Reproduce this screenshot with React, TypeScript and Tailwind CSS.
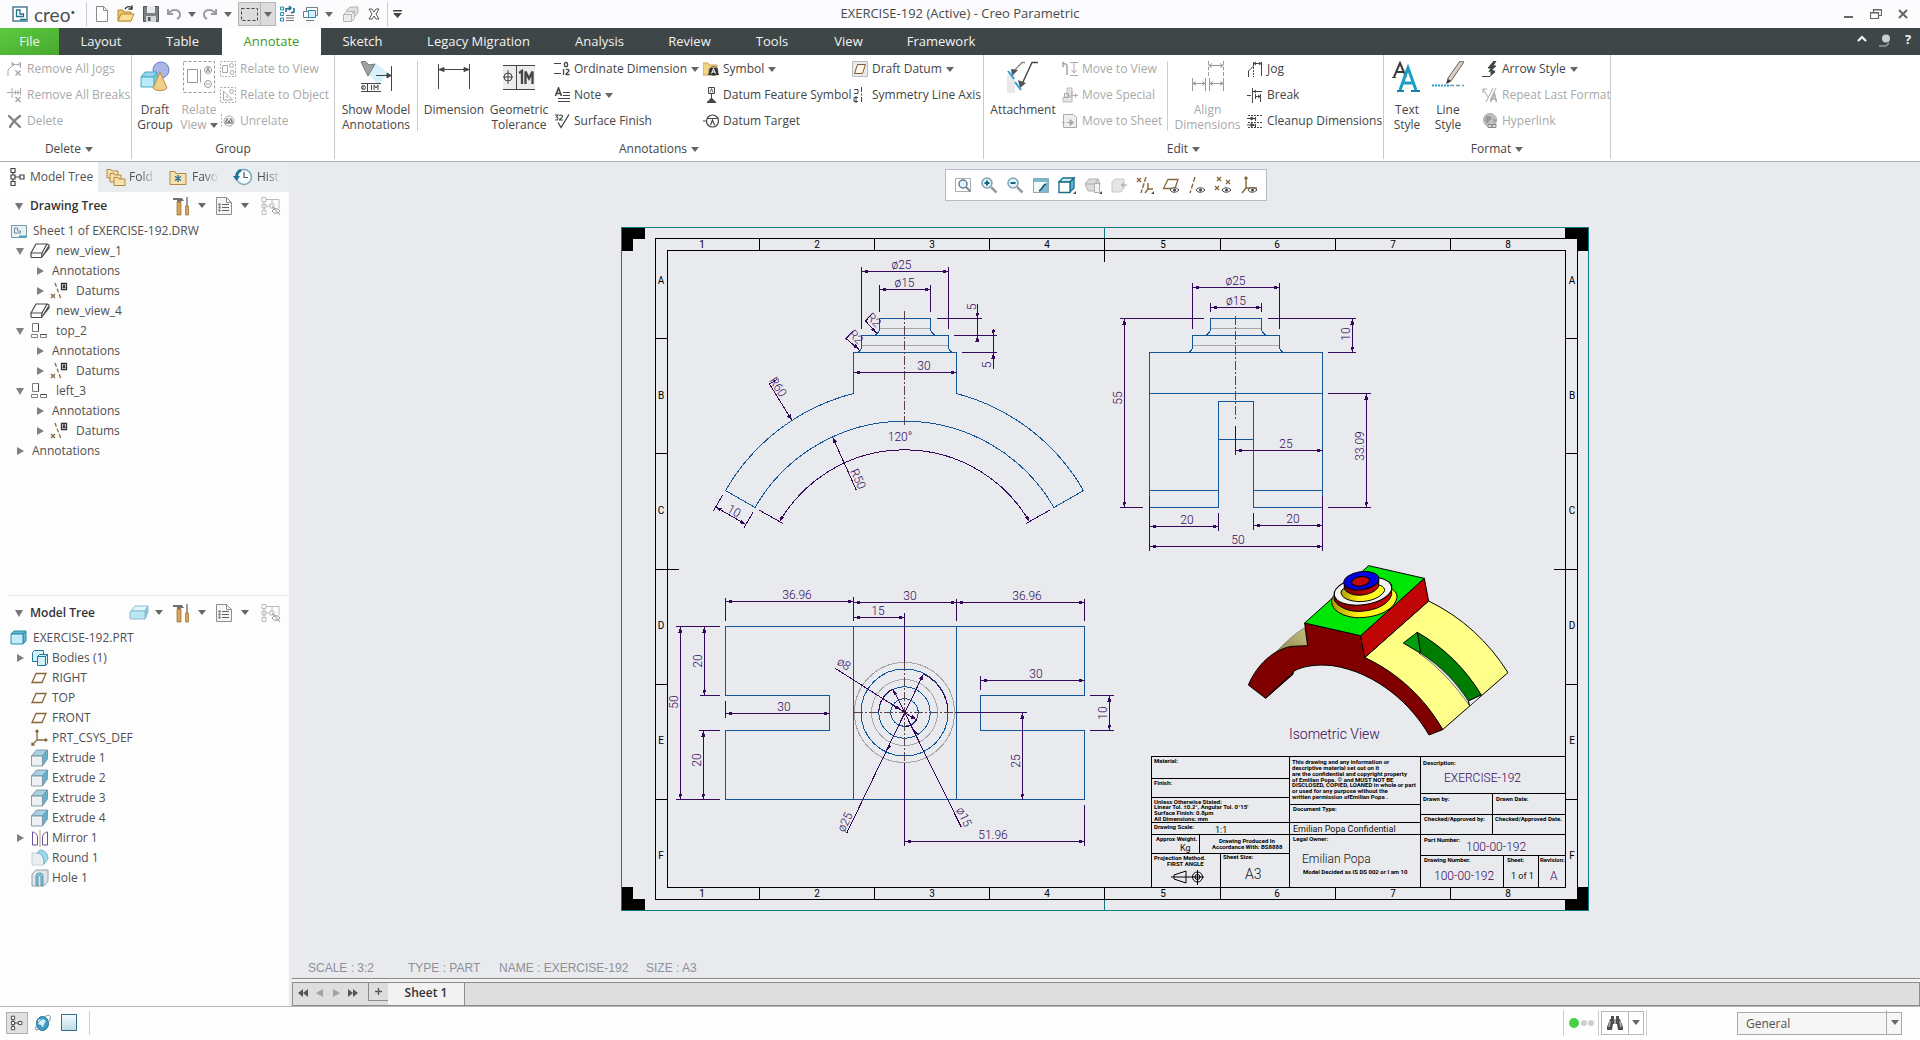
import type { ReactNode } from 'react';

const BR = '#85683a';

// 16x16 glyphs
const small: Record<string, ReactNode> = {
  jogs: (
    <g fill="none" stroke="currentColor">
      <path d="M1 15V9l4-4V1M5.500 3.500h7M13.500 1v6M7 2l-2 1.500 2 1.500M11.500 2l2 1.500-2 1.500" />
      <path d="M8.500 9.500l5 5M13.500 9.500l-5 5" strokeWidth="1.500" />
    </g>
  ),
  breaks: (
    <g fill="none" stroke="currentColor">
      <path d="M0 5.500h4M5 1v10M5 5.500h7M8.500 3.500v4M13.500 1v7M10 3.500l2.500 2-2.500 2" />
      <path d="M8.500 10l5 5M13.500 10l-5 5" strokeWidth="1.500" />
    </g>
  ),
  del: <path d="M2 3c3 3 7 7 11 11M13 3C9 6 5 10 3 14" fill="none" stroke="#858585" strokeWidth="2.400" strokeLinecap="round" />,
  relView: (
    <g fill="none" stroke="currentColor">
      <path d="M.5.5h15v15H.5z" strokeDasharray="2 1.500" stroke="#aaa" />
      <path d="M2.500 4.500h5v7h-5z" />
      <circle cx="11.500" cy="4.500" r="2" />
      <circle cx="12" cy="11.500" r="2" />
    </g>
  ),
  relObj: (
    <g fill="none" stroke="currentColor">
      <path d="M.5.5h15v15H.5z" strokeDasharray="2 1.500" stroke="#aaa" />
      <path d="M3.500 4v9h9zM6 9l2 2" />
      <circle cx="11.500" cy="4.500" r="2" />
    </g>
  ),
  unrel: (
    <g fill="none" stroke="currentColor">
      <path d="M1.500 1v14" strokeDasharray="2 1.500" stroke="#aaa" />
      <circle cx="9" cy="8" r="5" />
      <path d="M5 10.500l1.500-5h5l1.500 5z" fill="#777" />
      <path d="M7 9.500l2-4 2 4" stroke="#fff" />
    </g>
  ),
  ordinate: (
    <g fill="none" stroke="currentColor">
      <path d="M0 2.500h7M0 12.500h7" />
      <ellipse cx="12" cy="3.500" rx="1.600" ry="2.200" strokeWidth="1.300" />
      <path d="M9.500 8v6M12 9c.5-1 3-1 3 .5S12 12 12 13.500h3.500" strokeWidth="1.300" />
    </g>
  ),
  note: (
    <g stroke="currentColor">
      <path d="M1.500 9L4.500 1l3 8M2.500 6.500h4" fill="none" strokeWidth="1.600" />
      <path d="M9 5.500h7M9 8.500h7M4 11.500h12M4 14.500h12" strokeWidth="1" />
    </g>
  ),
  finish: (
    <g fill="none" stroke="currentColor">
      <path d="M1 2h3L2.500 4c2 0 2 3 0 3H1M5.500 3c.5-1.500 3-1.200 3 .3S5.500 6 5.500 7h3.500" strokeWidth="1.100" />
      <path d="M4 9.500l3 5 8-13" strokeWidth="1.300" />
    </g>
  ),
  symbol: (
    <g>
      <path d="M0 2h5l1 2h8v10H0z" fill="#f2d489" stroke="#c5a253" />
      <path d="M5 14l2-7h7l2 7z" fill="#333" />
      <circle cx="10.500" cy="10" r="4.300" fill="none" stroke="#444" />
      <path d="M8.500 12.500l2-5 2 5M9 11h3" stroke="#fff" fill="none" />
    </g>
  ),
  datumFeat: (
    <g fill="none" stroke="currentColor">
      <path d="M5.500.5h6v6h-6zM8.500 7v6" />
      <path d="M7 5.500l1.500-4L10 5.500" strokeWidth=".8" />
      <path d="M4 15.500l4.500-4.500 4.500 4.500z" fill="currentColor" />
    </g>
  ),
  datumTarget: (
    <g fill="none" stroke="currentColor" strokeWidth="1.200">
      <circle cx="9.500" cy="8" r="6" />
      <path d="M0 8h3.500M4.500 5.500h10M7.500 12l2-5 2 5" />
    </g>
  ),
  draftDatum: (
    <g>
      <path d="M.5.5h15v15H.5z" fill="#e9ebec" stroke="#b9bcbe" />
      <path d="M5.500 3.500h8l-3 9h-8z" fill="#fdf6e8" stroke="#7a5f35" />
    </g>
  ),
  symAxis: (
    <g fill="none" stroke="currentColor">
      <path d="M2 2.500h4v4H2M6 10.500H2v4h4M4 9v7" />
      <path d="M9.500 0v16" strokeDasharray="5 1.500 2 1.500" />
    </g>
  ),
  moveView: (
    <g fill="none" stroke="currentColor">
      <path d="M1 3.500C3 2 5 3 5 5v9M0 3l2-2M0 4l2 2" stroke="#aaa" strokeWidth="1.600" />
      <path d="M8 1.500h8M12 2v10M9.500 9l2.500 3 2.500-3M8 14.500h8" />
    </g>
  ),
  moveSpec: (
    <g fill="none" stroke="currentColor">
      <path d="M5 1h5v8H5zM1 10h9v5H1z" fill="#e5e5e5" stroke="#bbb" />
      <path d="M2.500 6.500h4v4h-4zM10 4v7M11 8.500h5M13.500 6.500v4" />
    </g>
  ),
  moveSheet: (
    <g fill="none" stroke="currentColor">
      <path d="M1.500 1.500h10l3 3v10h-13z" fill="#eee" stroke="#aaa" />
      <path d="M0 9.500h4" strokeDasharray="1 1" />
      <path d="M5 9.500h6M8 6.500l3.500 3-3.500 3z" fill="currentColor" />
    </g>
  ),
  jog: (
    <g fill="none" stroke="currentColor">
      <path d="M1.500 16v-6l5-5V1M7 2.500h7M14.500 1v14M9 1L7 2.500 9 4M12 1l2 1.500L12 4" />
      <path d="M6.500 6v10" strokeDasharray="2 1" />
    </g>
  ),
  brk: (
    <g fill="none" stroke="currentColor">
      <path d="M0 8.500h4M5.500 1v15M6 4.500h9M8 9.500h5M8.500 7v5M13.500 7v8" />
      <path d="M9 3L7 4.500 9 6M11 8l2 1.500L11 11" />
    </g>
  ),
  cleanup: (
    <g fill="none" stroke="currentColor">
      <path d="M1 2.500h15M1 9.500h15M1 14.500h15" strokeDasharray="2 1" />
      <path d="M0 5.500h8M0 12h8M8.500 4v4M8.500 11v3M4 4l3 1.500L4 7zM4 10.500l3 1.500-3 1.500z" fill="currentColor" />
    </g>
  ),
  arrow: (
    <g stroke="currentColor" fill="currentColor">
      <path d="M0 15.500h8l5-6" fill="none" />
      <path d="M12 0L6 7h3l-2 4 7-6h-3l3-5z" />
      <path d="M9 8l4 3-4 3z" />
    </g>
  ),
  repeat: (
    <g stroke="currentColor" fill="none">
      <path d="M1 2h4M1 2v4M1 2l3 5 2 3M11 1L4 15M14 1L8 13" />
      <path d="M8.500 15l4-8 2 8M10 12h4" strokeWidth="1.500" />
    </g>
  ),
  hyper: (
    <g>
      <circle cx="8" cy="7" r="6.500" fill="#c4c4c4" stroke="#a5a5a5" />
      <path d="M4 3c2-1 3 1 5 0l1 3-3 2-1 3-3-3zM11 5l3 2-2 3z" fill="#999" />
      <path d="M6 11.500h4v3H6zM10 11.500h4v3h-4z" fill="#ddd" stroke="#888" />
    </g>
  ),
};

// 32x32 glyphs
const large: Record<string, ReactNode> = {
  draftGroup: (
    <g>
      <circle cx="22" cy="9" r="8" fill="#a9b6e6" stroke="#6c7cc0" />
      <path d="M2 16l4-5h12l-3 5zM15 16l3-5v10l-3 5z" fill="#8fd4ea" stroke="#4fa7c4" />
      <path d="M2 16h13v10H2z" fill="#b9eaf7" stroke="#4fa7c4" />
      <path d="M21 11l-7 16c2 3.500 12 3.500 14 0z" fill="#f0cf8c" stroke="#b98d42" />
    </g>
  ),
  relateView: (
    <g fill="none" stroke="#9a9a9a">
      <path d="M.5.500h31v31H.5z" strokeDasharray="3 2" />
      <path d="M4.500 8.500h10v13h-10zM17.500 8.500v13" />
      <circle cx="25" cy="9" r="3.500" />
      <path d="M23.500 11l1.500-4 1.500 4" strokeWidth="1.500" />
      <circle cx="25" cy="23" r="3.500" />
      <path d="M23 23h4" />
    </g>
  ),
  showModel: (
    <g fill="none" stroke="#454545">
      <path d="M6 10l10-8 12 10-10 12z" fill="#d6f3fb" stroke="none" />
      <path d="M1 1l4-1 4 4 6-1-7 12-4-8z" fill="#9fa3a5" stroke="#777" />
      <path d="M31.500 5v25M16 14.500h14M27 12l4 2.500-4 2.500z" fill="#454545" />
      <path d="M1 22.500h20M1 30.500h20M7.500 22v9M3 24.500v4M5.500 26.500a2 2 0 0 0-4 0 2 2 0 0 0 4 0M11.500 24v5M14 29v-5l2 3 2-3v5" />
    </g>
  ),
  dimension: (
    <g fill="#454545" stroke="#454545">
      <path d="M.5 3v25M31.500 3v25M1 8.500h30" fill="none" />
      <path d="M1 8.500l5-2v4zM31 8.500l-5-2v4z" />
    </g>
  ),
  geoTol: (
    <g fill="none" stroke="#454545">
      <path d="M0 5h32v23H0z" fill="#ececec" stroke="none" />
      <path d="M0 4.500h32M0 28.500h32M13.500 4v25" />
      <circle cx="5" cy="16" r="4" />
      <path d="M5 9v14M0 16h10" />
      <path d="M16 12l3-2v13M22.500 23V10.500l3.500 7 3.500-7V23" strokeWidth="2.300" />
    </g>
  ),
  attachment: (
    <g>
      <path d="M0 14h8v18H0z" fill="#e9e9e9" />
      <path d="M31 1.500h-6L15 23" fill="none" stroke="#454545" strokeWidth="1.400" />
      <path d="M18 1.500h-3L6 11" fill="none" stroke="#8a8a8a" strokeWidth="1.400" />
      <path d="M11 19l8 3-6 5zM4 8l7 1-6 6z" fill="#555" />
      <path d="M1 10l6 8M8 21l6 8" stroke="#2ea2d8" strokeWidth="2" />
    </g>
  ),
  alignDim: (
    <g fill="none" stroke="#9a9a9a">
      <path d="M16.500 0v16M31.500 0v16" strokeDasharray="4 1.500" />
      <path d="M.5 17v13M13.500 17v13M17.500 17v13M31.500 17v13M17 4.500h14M1 22.500h12M18 22.500h13M20 2.500l-3 2 3 2M28 2.500l3 2-3 2M4 20.500l-3 2 3 2M10 20.500l3 2-3 2M21 20.500l-3 2 3 2M28 20.500l3 2-3 2" />
    </g>
  ),
  textStyle: (
    <g fill="none">
      <path d="M3 16L9 2l6 14M5 11h8" stroke="#3c3c3c" strokeWidth="2" />
      <path d="M1 16.500h4" stroke="#3c3c3c" />
      <path d="M9 29l8-22 8 22M12 22h10" stroke="#1d9cc6" strokeWidth="3" />
      <path d="M6 30h7M20 30h9" stroke="#1780a5" strokeWidth="2" />
    </g>
  ),
  lineStyle: (
    <g>
      <path d="M0 24.500h18" stroke="#2aa0c8" strokeWidth="2" strokeDasharray="2 1" />
      <path d="M18 24.500h14" stroke="#6f9cab" strokeDasharray="4 2" strokeWidth="1.500" />
      <path d="M28 0l4 1-13 19-4 2 1-5z" fill="#d8cfc2" stroke="#6d6357" />
      <path d="M14 23l2-5 3 2z" fill="#333" />
    </g>
  ),
};

// 20x20 glyphs used by the trees and the side bar
const tree: Record<string, ReactNode> = {
  sheet: (
    <g fill="none">
      <path d="M2.500 4.500h15v12h-15z" fill="#e8f1f5" stroke="#7898a8" />
      <path d="M5.500 7v5h6v-2h-3V7z" stroke="#6d8ea0" />
      <path d="M10 16.500v-2h7v2z" fill="#3fa3c7" />
    </g>
  ),
  solid: (
    <g fill="none" stroke="#4a4a4a" strokeWidth="1.200" strokeLinejoin="round">
      <path d="M1 12L6 3h11l-5 9z" />
      <path d="M1 12v3.500q0 1 1 1h9.500L19 7V4l-2-1M12 12l-.5 4.500M13 14.500l5.500-9" />
    </g>
  ),
  ortho: (
    <g fill="none" stroke="#808080">
      <path d="M2.500 2.500h6v8h-6zM1.500 13.500h6v3h-6zM10.500 13.500h6v3h-6z" />
      <path d="M8.500 2.500v8M10.500 13.500h6" stroke="#444" />
    </g>
  ),
  datums: (
    <g fill="none" stroke={BR} strokeWidth="1.300">
      <path d="M5 2l6 16" strokeDasharray="4 2" />
      <path d="M1 13l4 4M5 13l-4 4" />
      <path d="M11.500 2.500h5v6h-5zM13 7l1-3 1 3" stroke="#333" />
    </g>
  ),
  part: (
    <g stroke="#2f8bab">
      <path d="M2 6l3-3h12l-3 3zM14 6l3-3v10l-3 3z" fill="#5fb9d6" />
      <path d="M2 6h12v10H2z" fill="#c3ecf8" />
    </g>
  ),
  bodies: (
    <g stroke="#1f7a9c" fill="#d5f2fa">
      <path d="M2.500 4.500l2-2h9v9l-2 2h-9z" />
      <path d="M7.500 8.500l2-2h8v9l-2 2h-8zM7.500 8.500h8v9M15.500 8.500l2-2" />
    </g>
  ),
  plane: <path d="M6 5.500h10l-4 9H2z" fill="#fffdf8" stroke={BR} strokeWidth="1.300" />,
  csys: (
    <g fill="none" stroke={BR} strokeWidth="1.300">
      <path d="M7 2v10h10M7 12l-5 5M5.500 4L7 2l1.500 2M15 10.500l2 1.500-2 1.500M2 14.500V17h2.500" />
    </g>
  ),
  extrude: (
    <g stroke="#6d8d9a" strokeWidth=".8">
      <path d="M1.500 8l5-6h11l-5 6z" fill="#a5d3e4" />
      <path d="M12.500 8l5-6v9l-5 7z" fill="#69b2cf" />
      <path d="M1.500 8h11v10h-11z" fill="#eef0f1" />
    </g>
  ),
  mirror: (
    <g fill="none" stroke="#6a4f9c">
      <path d="M2.500 17V4c3 0 5 3 5 6v7zM17.500 17V4c-3 0-5 3-5 6v7z" />
      <path d="M10 2v17" stroke="#b79a70" />
    </g>
  ),
  round: (
    <g stroke="#5aa6c2" strokeWidth=".8">
      <path d="M2 5h6c5 0 6 5 6 12H2z" fill="#e9eef0" stroke="#bcc8cc" />
      <path d="M7 5l3-3c5 0 8 4 8 9l-4 5c0-7-2-11-7-11z" fill="#9fd9ec" />
    </g>
  ),
  hole: (
    <g stroke="#4d8ea6" strokeWidth=".9">
      <path d="M2 6l4-4h12v11l-4 5H2z" fill="#dfe5e8" stroke="#8c979c" />
      <path d="M6 17V8c0-4 7-4 7 0v9l-2 1V9c0-2-3-2-3 0v9z" fill="#7fcbe3" />
    </g>
  ),
  nodes: (
    <g fill="#fff" stroke="#444" strokeWidth="1.200">
      <path d="M5 3v14M5 10h8" />
      <path d="M3 1.500h4v4H3zM3 8h4v4H3zM3 14.500h4v4H3zM12 8h4v4h-4z" />
    </g>
  ),
  folders: (
    <g fill="#f6e0ab" stroke="#b08b47">
      <path d="M1 2.500h4l1 1.500h6v7H1z" />
      <path d="M4 6.500h4l1 1.500h6v7H4z" />
      <path d="M8 10.500h4l1 1.500h6v6.500H8z" />
    </g>
  ),
  favs: (
    <g>
      <path d="M2 4.500h5l1 2h10v11H2z" fill="#f6e0ab" stroke="#b08b47" />
      <path d="M10 8v7M7 9.500l6 4M13 9.500l-6 4" stroke="#1f6f93" strokeWidth="1.300" />
    </g>
  ),
  history: (
    <g fill="none">
      <circle cx="11" cy="10" r="7.500" fill="#f5fafc" stroke="#7fa6b6" strokeWidth="1.500" />
      <path d="M11 5v5.500h4" stroke="#555" strokeWidth="1.200" />
      <path d="M8 3C5 4.500 3.500 7 3.500 10" stroke="#1c7396" strokeWidth="3" />
      <path d="M0 9h7l-3.500 5z" fill="#1c7396" />
    </g>
  ),
  tools: (
    <g>
      <path d="M2 2h9l2 3h-3v1H6V4H2z" fill="#6e7275" />
      <path d="M6 6h4v13H6z" fill="#d7a25a" stroke="#9a6c2c" strokeWidth=".7" />
      <path d="M16 1v9" stroke="#666" strokeWidth="1.300" />
      <path d="M14.500 10h3v9h-3z" fill="#d7a25a" stroke="#9a6c2c" strokeWidth=".7" />
    </g>
  ),
  settings: (
    <g fill="none" stroke="#8b8f92">
      <path d="M2.500 1.500h10l5 5v12h-15z" fill="#f4f6f7" />
      <path d="M12.500 1.500v5h5" />
      <path d="M8 8.500h7M8 11.500h7M8 14.500h7" stroke="#5f6467" />
      <path d="M4.500 8.500h2M4.500 11.500h2M4.500 14.500h2" stroke="#5f6467" strokeWidth="1.800" />
    </g>
  ),
  hidden: (
    <g fill="none" stroke="#a0a0a0">
      <path d="M1 1.500h4v4H1zM1 8h4v4H1zM1 14.500h4v4H1zM9 8h4v4H9zM5 3.500h13v9M5 10h4M3 5.500v9M11 3.500V8" />
      <path d="M11 15c2-3 6-3 8 0-2 3-6 3-8 0zM11 10l8 9" stroke="#666" />
    </g>
  ),
  slab: (
    <g stroke="#8fbccb">
      <path d="M2 8l4-5h13l-3 5z" fill="#e1f6fc" />
      <path d="M16 8l3-5v6l-3 7z" fill="#7fc4da" />
      <path d="M1 9q0-1 1-1h14v8H2q-1 0-1-1z" fill="#b8e6f3" />
    </g>
  ),
};

function Eye() {
  return (
    <g stroke="#444">
      <path d="M8 14c2-3 6-3 9 0-3 3-7 3-9 0z" fill="#fff" />
      <circle cx="12.500" cy="14" r="1.500" fill="#444" stroke="none" />
    </g>
  );
}

// 18x18 glyphs of the floating view bar
const view: [string, ReactNode][] = [
  ['Refit', <g key="a" fill="none"><path d="M1.500 2.500h15v13h-15z" stroke="#a8b0b4" /><circle cx="9" cy="8" r="4" fill="#e3f5fb" stroke="#5c7f90" strokeWidth="1.500" /><path d="M12 11l4.500 4.500" stroke="#7c8a92" strokeWidth="2" /></g>],
  ['Zoom In', <g key="b" fill="none"><circle cx="7" cy="7" r="5" fill="#e3f5fb" stroke="#7fa3b1" strokeWidth="1.500" /><path d="M4.500 7h5M7 4.500v5" stroke="#126687" strokeWidth="2" /><path d="M11 11l5.500 5.500" stroke="#929ca1" strokeWidth="2.500" /></g>],
  ['Zoom Out', <g key="c" fill="none"><circle cx="7" cy="7" r="5" fill="#e3f5fb" stroke="#7fa3b1" strokeWidth="1.500" /><path d="M4.500 7h5" stroke="#126687" strokeWidth="2" /><path d="M11 11l5.500 5.500" stroke="#929ca1" strokeWidth="2.500" /></g>],
  ['Repaint', <g key="d"><path d="M1.500 2.500h15v14h-15z" fill="#7fb9d0" stroke="#8fa9b4" /><path d="M2 6h13L7 16H2z" fill="#f2fafc" /><path d="M14 8c-4 1-3 5-7 7" fill="none" stroke="#15506c" strokeWidth="1.500" /></g>],
  ['Display Style', <g key="e" stroke="#1a6c8a" strokeWidth="1.300"><path d="M1 6l4-4h11l-4 4z" fill="#cdeef8" /><path d="M12 6l4-4v10l-4 4z" fill="#63b6d2" /><path d="M1 6h11v10.500H1z" fill="#fff" /></g>],
  ['Sheet Manager', <g key="f" stroke="#adadad"><path d="M1 8l4-5h9l2 5-4 7H4z" fill="#dcdcdc" /><path d="M1 8h10l3-5" fill="none" /><path d="M10.500 7.500h5v9h-5z" fill="#f3f3f3" /></g>],
  ['Section View', <g key="g" stroke="#bdbdbd"><path d="M2 6l3-3h9v9l-3 4H2z" fill="#dedede" /><path d="M17 9h-5M14 6.500L11.500 9l2.500 2.500" stroke="#8b8b8b" fill="none" /></g>],
  ['Datum Display', <g key="h" fill="none" stroke={BR} strokeWidth="1.400"><path d="M1 2l4 4M5 2L1 6" /><path d="M10 1L5 17" strokeDasharray="5 1.500" /><path d="M12 7v6h5M12 13l-3 4" /></g>],
  ['Plane Display', <g key="i"><path d="M6 3.500h10l-3 9H1.500z" fill="none" stroke={BR} strokeWidth="1.300" /><Eye /></g>],
  ['Axis Display', <g key="j"><path d="M7 1L2 17" fill="none" stroke={BR} strokeWidth="1.400" strokeDasharray="5 2" /><Eye /></g>],
  ['Point Display', <g key="k"><path d="M3 1l4 4M7 1L3 5M12 4l4 4M16 4l-4 4M1 10l4 4M5 10l-4 4" fill="none" stroke={BR} strokeWidth="1.300" /><Eye /></g>],
  ['Csys Display', <g key="l"><path d="M6 1v11h11M6 12l-4 5M4.500 3L6 1l1.500 2" fill="none" stroke={BR} strokeWidth="1.400" /><Eye /></g>],
];

function Caret() {
  return (
    <svg viewBox="0 0 8 5" className="inline-block h-[5px] w-2 shrink-0" aria-hidden="true">
      <path d="M0 0h8L4 5z" fill="#666" />
    </svg>
  );
}

function TreeIcon({ name, dim }: { name: string; dim?: boolean }) {
  return (
    <svg viewBox="0 0 20 20" className={`size-5 shrink-0 ${dim ? 'opacity-70' : ''}`} aria-hidden="true">
      {tree[name]}
    </svg>
  );
}

function Tool({ label, children, className = '' }: { label: string; children: ReactNode; className?: string }) {
  return (
    <button aria-label={label} className={`flex shrink-0 items-center justify-center ${className}`}>
      {children}
    </button>
  );
}

/* ---------- title bar ---------- */

function TitleBar() {
  return (
    <header className="relative flex h-7 items-center bg-[#fcfcfe] pl-3">
      <svg viewBox="0 0 16 16" className="mr-[6px] size-4" aria-hidden="true">
        <path d="M1 1h14v14H1z" fill="#fff" stroke="#4b7d92" strokeWidth="1.500" />
        <path d="M4.500 4v6.500h7V8H8V4zM8 13.500h6" fill="none" stroke="#23718f" strokeWidth="1.300" />
      </svg>
      <span className="w-[52px] font-[Lato] text-[19px] leading-none text-[#4b4f52]">creo<span className="align-super text-[8px]">•</span></span>
      <span className="mr-1 h-6 w-px bg-[#c9ccd0]" />
      <div className="flex items-center">
        <Tool label="New" className="w-[22px]">
          <svg viewBox="0 0 14 16" className="h-4 w-[14px]"><path d="M1.500.5h7l4 4v11h-11zM8.500.5v4h4" fill="#fff" stroke="#8b8b8b" /></svg>
        </Tool>
        <Tool label="Open" className="w-[26px]">
          <svg viewBox="0 0 18 18" className="size-[18px]"><path d="M1 5h5l1 2h7v9H1z" fill="#efc26b" stroke="#b98b33" /><path d="M1 16l3-7h13l-3 7z" fill="#fbdc95" stroke="#b98b33" /><path d="M8 4c2-3 5-3 7-1M15 .500V4h-3.500" fill="none" stroke="#333" strokeWidth="1.400" /></svg>
        </Tool>
        <Tool label="Save" className="w-[24px]">
          <svg viewBox="0 0 16 16" className="size-4"><path d="M.5.5h15v15H.5z" fill="#7b8084" stroke="#50555a" /><path d="M4 0h8v7H4z" fill="#e8eaeb" /><path d="M3 10h10v6H3z" fill="#d2d6d8" /><path d="M5 11h2.500v4H5z" fill="#555" /></svg>
        </Tool>
        <Tool label="Undo" className="w-[36px] gap-[6px]">
          <svg viewBox="0 0 16 14" className="h-[14px] w-4"><path d="M2 2v5h5M2.500 7C5 2 14 1 14 8c0 2-1 3-3 4" fill="none" stroke="#999da0" strokeWidth="2" /></svg>
          <Caret />
        </Tool>
        <Tool label="Redo" className="mr-[3px] w-[36px] gap-[6px]">
          <svg viewBox="0 0 16 14" className="h-[14px] w-4"><path d="M14 2v5H9M13.500 7C11 2 2 1 2 8c0 2 1 3 3 4" fill="none" stroke="#999da0" strokeWidth="2" /></svg>
          <Caret />
        </Tool>
        <Tool label="Select" className="h-6 w-[23px] border border-[#b5b5b5] bg-[#dcdcdc]">
          <svg viewBox="0 0 17 13" className="h-[13px] w-[17px]"><path d="M.5.5h16v12H.5z" fill="none" stroke="#444" strokeDasharray="3 2" /></svg>
        </Tool>
        <Tool label="Select options" className="mr-px h-6 w-[15px] border border-l-0 border-[#b5b5b5] bg-[#dcdcdc]"><Caret /></Tool>
        <Tool label="Regenerate" className="w-[20px]">
          <svg viewBox="0 0 16 16" className="size-4"><path d="M1.500 1h3v3h-3zM1.500 6.500h3v3h-3zM1.500 12h3v3h-3z" fill="#e8f6fa" stroke="#2a8db0" /><path d="M7 9.500h8M7 12h8M7 14.500h8" stroke="#777" /><path d="M7 6V3l5-1M10 0l2 2-2 2M15 2v4l-3 1" fill="none" stroke="#1b6f92" strokeWidth="1.600" /></svg>
        </Tool>
        <Tool label="Windows" className="w-[42px] gap-[6px]">
          <svg viewBox="0 0 16 16" className="size-4"><path d="M3.500 1.500h11v8h-11z" fill="#fff" stroke="#6f7f88" /><path d="M.5 5.500h8v6h-8z" fill="#fff" stroke="#6f7f88" /><path d="M5.500 4.500h7v7h-7z" fill="#d9f0f8" stroke="#2a8db0" /><path d="M3 14.500h8" stroke="#6f7f88" /></svg>
          <Caret />
        </Tool>
        <Tool label="Activate" className="w-[22px]">
          <svg viewBox="0 0 17 16" className="h-4 w-[17px]"><path d="M4 5l4-4h8v6l-4 4" fill="#e0e0e0" stroke="#b4b4b4" /><path d="M1.500 8.500l3-3h8v7l-3 3h-8zM1.500 8.500h8v7M9.500 8.500l3-3" fill="#ececec" stroke="#b4b4b4" /></svg>
        </Tool>
        <Tool label="Close window" className="w-[26px]">
          <svg viewBox="0 0 12 12" className="size-3"><path d="M1 1h3l2 3 2-3h3L8 6l3 5H8L6 8l-2 3H1l3-5z" fill="#fff" stroke="#5b5b5b" /></svg>
        </Tool>
        <span className="mr-px h-6 w-px bg-[#c9ccd0]" />
        <Tool label="Customize" className="w-4">
          <svg viewBox="0 0 9 8" className="h-2 w-[9px]"><path d="M0 0h9v1.500H0zM0 3h9L4.500 8z" fill="#444" /></svg>
        </Tool>
      </div>
      <h1 className="pointer-events-none absolute inset-x-0 text-center text-[13px] text-[#4a4a4a]">EXERCISE-192 (Active) - Creo Parametric</h1>
      <div className="ml-auto flex items-center gap-[15px] pr-[11px] text-[#666]">
        <Tool label="Minimize"><svg viewBox="0 0 12 12" className="size-3"><path d="M1 9h9" stroke="currentColor" strokeWidth="2" /></svg></Tool>
        <Tool label="Restore"><svg viewBox="0 0 12 12" className="size-3"><path d="M3.500 4V1.500h8v6H9M.5 4.500h8v6h-8zM3 2h8M1 5h8" fill="none" stroke="currentColor" strokeWidth="1.200" /></svg></Tool>
        <Tool label="Close"><svg viewBox="0 0 12 12" className="size-3"><path d="M2 2l8 8M10 2l-8 8" stroke="currentColor" strokeWidth="2" /></svg></Tool>
      </div>
    </header>
  );
}

/* ---------- ribbon ---------- */

const tabs = [
  ['Layout', 'w-[84px]'],
  ['Table', 'w-[79px]'],
  ['Annotate', 'w-[99px] bg-white text-[#3d9a1d]'],
  ['Sketch', 'w-[83px]'],
  ['Legacy Migration', 'w-[149px]'],
  ['Analysis', 'w-[93px]'],
  ['Review', 'w-[87px]'],
  ['Tools', 'w-[78px]'],
  ['View', 'w-[75px]'],
  ['Framework', 'w-[110px]'],
];

function TabBar() {
  return (
    <nav className="flex h-[27px] items-stretch bg-[#3f4648] text-[13px] text-[#f2f2f2]">
      <button className="w-[59px] bg-linear-to-br from-[#5ccb3f] to-[#48a82f]">File</button>
      {tabs.map(([name, cls]) => (
        <button key={name} className={cls}>{name}</button>
      ))}
      <div className="ml-auto flex items-center gap-[10px] pr-[6px] pb-[3px]">
        <Tool label="Collapse ribbon"><svg viewBox="0 0 12 12" className="size-3"><path d="M2 7l4-4 4 4" fill="none" stroke="#fff" strokeWidth="2" /></svg></Tool>
        <Tool label="Search"><svg viewBox="0 0 14 14" className="size-[14px]"><circle cx="8" cy="5.500" r="4" fill="#ccc" /><path d="M1 13h7l3-3" fill="none" stroke="#999" strokeWidth="1.500" /></svg></Tool>
        <button aria-label="Help" className="w-3 text-[13px] font-bold">?</button>
      </div>
    </nav>
  );
}

type Cmd = { icon: string; text: string; off?: boolean; menu?: boolean };

function CmdColumn({ items, className = '' }: { items: Cmd[]; className?: string }) {
  return (
    <div className={`flex shrink-0 flex-col pt-px ${className}`}>
      {items.map((c) => (
        <button key={c.text} disabled={c.off} className={`flex h-[26px] items-center gap-1 whitespace-nowrap text-left ${c.off ? 'text-[#a9a9a9]' : 'text-[#454545]'}`}>
          <svg viewBox="0 0 16 16" className="size-4 shrink-0" aria-hidden="true">{small[c.icon]}</svg>
          <span>{c.text}</span>
          {c.menu && <Caret />}
        </button>
      ))}
    </div>
  );
}

function BigButton({ icon, lines, off, menu, className = '' }: { icon: string; lines: string[]; off?: boolean; menu?: boolean; className?: string }) {
  return (
    <button disabled={off} className={`flex shrink-0 flex-col items-center pt-[6px] ${off ? 'text-[#a9a9a9]' : 'text-[#454545]'} ${className}`}>
      <svg viewBox="0 0 32 32" className="mb-[9px] size-8" aria-hidden="true">{large[icon]}</svg>
      {lines.map((l, i) => (
        <span key={l} className="leading-[15px] whitespace-nowrap">
          {l}{menu && i === lines.length - 1 && <> <Caret /></>}
        </span>
      ))}
    </button>
  );
}

function Group({ label, menu, className, children }: { label: string; menu?: boolean; className: string; children: ReactNode }) {
  return (
    <section className={`flex shrink-0 flex-col border-r border-[#c4cbd0] ${className}`}>
      <div className="flex h-[84px]">{children}</div>
      <button className="flex h-5 items-center justify-center gap-1 text-[#454545]">
        {label}{menu && <Caret />}
      </button>
    </section>
  );
}

function Ribbon() {
  return (
    <div className="flex h-[107px] overflow-hidden border-b border-[#a9b1b5] bg-white pb-[2px] text-[12px]">
      <Group label="Delete" menu className="w-[132px] pl-[7px]">
        <CmdColumn items={[
          { icon: 'jogs', text: 'Remove All Jogs', off: true },
          { icon: 'breaks', text: 'Remove All Breaks', off: true },
          { icon: 'del', text: 'Delete', off: true },
        ]} />
      </Group>
      <Group label="Group" className="w-[203px]">
        <BigButton icon="draftGroup" lines={['Draft', 'Group']} className="w-[46px]" />
        <BigButton icon="relateView" lines={['Relate', 'View']} off menu className="w-[42px]" />
        <CmdColumn items={[
          { icon: 'relView', text: 'Relate to View', off: true },
          { icon: 'relObj', text: 'Relate to Object', off: true },
          { icon: 'unrel', text: 'Unrelate', off: true },
        ]} />
      </Group>
      <Group label="Annotations" menu className="w-[649px]">
        <BigButton icon="showModel" lines={['Show Model', 'Annotations']} className="w-[82px]" />
        <span className="mt-[6px] h-[70px] w-px bg-[#c9ced2]" />
        <BigButton icon="dimension" lines={['Dimension']} className="w-[72px]" />
        <BigButton icon="geoTol" lines={['Geometric', 'Tolerance']} className="w-[58px]" />
        <CmdColumn className="w-[155px] pl-[6px]" items={[
          { icon: 'ordinate', text: 'Ordinate Dimension', menu: true },
          { icon: 'note', text: 'Note', menu: true },
          { icon: 'finish', text: 'Surface Finish' },
        ]} />
        <CmdColumn className="w-[149px]" items={[
          { icon: 'symbol', text: 'Symbol', menu: true },
          { icon: 'datumFeat', text: 'Datum Feature Symbol' },
          { icon: 'datumTarget', text: 'Datum Target' },
        ]} />
        <CmdColumn items={[
          { icon: 'draftDatum', text: 'Draft Datum', menu: true },
          { icon: 'symAxis', text: 'Symmetry Line Axis' },
        ]} />
      </Group>
      <Group label="Edit" menu className="w-[400px]">
        <BigButton icon="attachment" lines={['Attachment']} className="w-[78px]" />
        <CmdColumn className="w-[105px]" items={[
          { icon: 'moveView', text: 'Move to View', off: true },
          { icon: 'moveSpec', text: 'Move Special', off: true },
          { icon: 'moveSheet', text: 'Move to Sheet', off: true },
        ]} />
        <span className="mt-[6px] h-[70px] w-px bg-[#c9ced2]" />
        <BigButton icon="alignDim" lines={['Align', 'Dimensions']} off className="w-[79px]" />
        <CmdColumn items={[
          { icon: 'jog', text: 'Jog' },
          { icon: 'brk', text: 'Break' },
          { icon: 'cleanup', text: 'Cleanup Dimensions' },
        ]} />
      </Group>
      <Group label="Format" menu className="w-[227px]">
        <BigButton icon="textStyle" lines={['Text', 'Style']} className="w-[46px]" />
        <BigButton icon="lineStyle" lines={['Line', 'Style']} className="w-[36px]" />
        <span className="mt-[6px] mr-2 ml-2 h-[70px] w-px bg-[#c9ced2]" />
        <CmdColumn items={[
          { icon: 'arrow', text: 'Arrow Style', menu: true },
          { icon: 'repeat', text: 'Repeat Last Format', off: true },
          { icon: 'hyper', text: 'Hyperlink', off: true },
        ]} />
      </Group>
    </div>
  );
}

/* ---------- side bar ---------- */

type Row = { text: string; icon?: string; level: number; state?: 'open' | 'closed' };

const drawingRows: Row[] = [
  { text: 'new_view_1', icon: 'solid', level: 0, state: 'open' },
  { text: 'Annotations', level: 1, state: 'closed' },
  { text: 'Datums', icon: 'datums', level: 1, state: 'closed' },
  { text: 'new_view_4', icon: 'solid', level: 0 },
  { text: 'top_2', icon: 'ortho', level: 0, state: 'open' },
  { text: 'Annotations', level: 1, state: 'closed' },
  { text: 'Datums', icon: 'datums', level: 1, state: 'closed' },
  { text: 'left_3', icon: 'ortho', level: 0, state: 'open' },
  { text: 'Annotations', level: 1, state: 'closed' },
  { text: 'Datums', icon: 'datums', level: 1, state: 'closed' },
  { text: 'Annotations', level: 0, state: 'closed' },
];

const modelRows: Row[] = [
  { text: 'Bodies (1)', icon: 'bodies', level: 0, state: 'closed' },
  { text: 'RIGHT', icon: 'plane', level: 0 },
  { text: 'TOP', icon: 'plane', level: 0 },
  { text: 'FRONT', icon: 'plane', level: 0 },
  { text: 'PRT_CSYS_DEF', icon: 'csys', level: 0 },
  { text: 'Extrude 1', icon: 'extrude', level: 0 },
  { text: 'Extrude 2', icon: 'extrude', level: 0 },
  { text: 'Extrude 3', icon: 'extrude', level: 0 },
  { text: 'Extrude 4', icon: 'extrude', level: 0 },
  { text: 'Mirror 1', icon: 'mirror', level: 0, state: 'closed' },
  { text: 'Round 1', icon: 'round', level: 0 },
  { text: 'Hole 1', icon: 'hole', level: 0 },
];

function TreeRows({ rows, root, rootIcon, gap }: { rows: Row[]; root: string; rootIcon: string; gap: string }) {
  return (
    <ul className="text-[12px] text-[#505050]">
      <li className="flex h-5 items-center gap-1 pl-[9px]">
        <TreeIcon name={rootIcon} />
        {root}
      </li>
      {rows.map((r, i) => (
        <li key={i} className={`flex h-5 items-center ${r.level ? 'pl-9' : 'pl-4'}`}>
          <span className="flex w-[14px] shrink-0">
            {r.state && (
              <button aria-label={`Toggle ${r.text}`}>
                <svg viewBox="0 0 8 8" className="size-2">
                  <path d={r.state === 'open' ? 'M0 1h8L4 8z' : 'M1 0l7 4-7 4z'} fill="#808080" />
                </svg>
              </button>
            )}
          </span>
          {r.icon && <TreeIcon name={r.icon} />}
          <span className={r.icon ? gap : 'ml-[2px]'}>{r.text}</span>
        </li>
      ))}
    </ul>
  );
}

function TreeHeader({ title, slab }: { title: string; slab?: boolean }) {
  return (
    <div className="flex h-[29px] items-center pr-2 pb-[2px] pl-[15px]">
      <svg viewBox="0 0 8 8" className="mr-[7px] size-2"><path d="M0 1h8L4 8z" fill="#777" /></svg>
      <h2 className="text-[12px] font-semibold text-[#333]">{title}</h2>
      <div className="ml-auto flex items-center gap-2">
        {slab && <Tool label="Model display" className="gap-[6px]"><TreeIcon name="slab" /><Caret /></Tool>}
        <Tool label="Tree tools" className="gap-[7px]"><TreeIcon name="tools" /><Caret /></Tool>
        <Tool label="Tree settings" className="gap-[7px]"><TreeIcon name="settings" /><Caret /></Tool>
        <Tool label="Hide items" className="ml-1"><TreeIcon name="hidden" dim /></Tool>
      </div>
    </div>
  );
}

function Sidebar() {
  return (
    <aside className="flex w-[289px] shrink-0 flex-col bg-[#fefdfe]">
      <div className="flex h-[30px] bg-[#e9edef] text-[12px] text-[#505050]">
        <button className="flex w-[98px] items-center gap-[2px] bg-white pl-[8px]"><TreeIcon name="nodes" />Model Tree</button>
        <button className="ml-2 flex w-[50px] items-center gap-[3px] mask-r-from-70%"><TreeIcon name="folders" />Fold</button>
        <button className="ml-3 flex w-[51px] items-center gap-1 mask-r-from-70%"><TreeIcon name="favs" />Favo</button>
        <button className="ml-[14px] flex w-[48px] items-center gap-1 mask-r-from-70%"><TreeIcon name="history" />Hist</button>
      </div>
      <div className="grid flex-1 grid-rows-[403fr_411fr]">
        <section>
          <TreeHeader title="Drawing Tree" />
          <TreeRows root="Sheet 1 of EXERCISE-192.DRW" rootIcon="sheet" rows={drawingRows} gap="ml-[6px]" />
        </section>
        <section className="ml-2 border-t border-[#e2e6ea] pt-[3px]">
          <div className="-ml-2">
            <TreeHeader title="Model Tree" slab />
            <TreeRows root="EXERCISE-192.PRT" rootIcon="part" rows={modelRows} gap="ml-[2px]" />
          </div>
        </section>
      </div>
    </aside>
  );
}

/* ---------- drawing ---------- */

const PURPLE = '#35085c';
const BLUE = '#14559a';

function Head({ x, y, a }: { x: number; y: number; a: number }) {
  return <path d="M0 0l-6-2v4z" transform={`translate(${x} ${y}) rotate(${a})`} fill={PURPLE} stroke="none" />;
}

// straight dimension line with a head at each end
function Dim({ p }: { p: [number, number, number, number] }) {
  const [x1, y1, x2, y2] = p;
  const a = (Math.atan2(y2 - y1, x2 - x1) * 180) / Math.PI;
  return (
    <g>
      <path d={`M${x1} ${y1}L${x2} ${y2}`} />
      <Head x={x1} y={y1} a={a + 180} />
      <Head x={x2} y={y2} a={a} />
    </g>
  );
}

const dims: [number, number, number, number][] = [
  [862.5, 272.5, 949.5, 272.5], [880.5, 290.5, 931.5, 290.5], [854.5, 373.5, 957.5, 373.5], [716.5, 508, 747, 525.5],
  [1193.5, 288.5, 1280.5, 288.5], [1211.5, 308.5, 1262.5, 308.5], [1236.5, 451.5, 1323.5, 451.5],
  [1125.5, 319.5, 1125.5, 508.5], [1353.5, 319.5, 1353.5, 353.5], [1367.5, 394.5, 1367.5, 508.5],
  [1150.5, 527.5, 1219.5, 527.5], [1254.5, 526.5, 1323.5, 526.5], [1150.5, 547.5, 1323.5, 547.5],
  [726.5, 602.5, 854.5, 602.5], [854.5, 603.5, 957.5, 603.5], [957.5, 603.5, 1085.5, 603.5], [854.5, 618.5, 905.5, 618.5],
  [705.5, 627.5, 705.5, 696.5], [681.5, 627.5, 681.5, 800.5], [704.5, 731.5, 704.5, 800.5], [726.5, 714.5, 830.5, 714.5],
  [981.5, 681.5, 1085.5, 681.5], [1110.5, 696.5, 1110.5, 731.5], [1023.5, 713.5, 1023.5, 800.5], [905.5, 842.5, 1085.5, 842.5],
];

// value, centre x, centre y, rotation
const labels: [string, number, number, number][] = [
  ['ø25', 902.5, 266, 0], ['ø15', 905.5, 284, 0], ['5', 972.5, 308, -90], ['5', 987.5, 366, -90],
  ['30', 925, 367, 0], ['R2', 875, 321, 45], ['R2', 857, 338, 45], ['R60', 779, 388, 57], ['R50', 859, 480, 66],
  ['10', 735, 512, 30], ['120°', 901, 438, 0],
  ['ø25', 1236.5, 282, 0], ['ø15', 1237, 302, 0], ['10', 1347, 335, -90], ['55', 1119, 399, -90],
  ['25', 1287, 445, 0], ['33.09', 1361, 447, -90], ['20', 1188, 521, 0], ['20', 1294, 520, 0], ['50', 1239, 541, 0],
  ['36.96', 798, 596, 0], ['30', 911, 597, 0], ['36.96', 1028, 597, 0], ['15', 879, 612, 0],
  ['20', 699, 662, -90], ['50', 675, 703, -90], ['20', 698, 761, -90], ['30', 785, 708, 0],
  ['30', 1037, 675, 0], ['10', 1104, 714, -90], ['25', 1017, 762, -90], ['51.96', 994, 836, 0],
  ['ø8', 845, 665, 33], ['ø25', 846, 823, -64], ['ø15', 965, 818, 64],
];

const cols = [703, 818, 933, 1048, 1164, 1278, 1394, 1509];
const rowMarks: [string, number][] = [['A', 281], ['B', 396], ['C', 511], ['D', 626], ['E', 741], ['F', 856]];

function Frame() {
  return (
    <g fill="none" stroke="#000" shapeRendering="crispEdges">
      <path d="M622.500 228.500h967v683h-967zM1105.500 228v12M1105.500 900v11" stroke="#0f7b80" />
      <path d="M623 229h23v11h-12v12h-11zM1589 229h-23v11h12v12h11zM623 911h23v-11h-12v-12h-11zM1589 911h-23v-11h12v-12h11z" fill="#000" stroke="none" />
      <path d="M656.500 239.500h922v661h-922zM668.500 251.500h898v637h-898z" />
      <path d="M760.500 240v12M875.500 240v12M990.500 240v12M1105.500 240v23M1221.500 240v12M1336.500 240v12M1451.500 240v12" />
      <path d="M760.500 889v12M875.500 889v12M990.500 889v12M1105.500 889v12M1221.500 889v12M1336.500 889v12M1451.500 889v12" />
      <path d="M656 339.500h12M656 454.500h12M656 570.500h24M656 685.500h12M656 800.500h12M1566 339.500h12M1566 454.500h12M1555 570.500h24M1566 685.500h12M1566 800.500h12" />
      <g fill="#000" stroke="none" className="font-['Roboto'] text-[10px]" textAnchor="middle">
        {cols.map((x, i) => (
          <g key={x}>
            <text x={x} y="249">{i + 1}</text>
            <text x={x} y="898">{i + 1}</text>
          </g>
        ))}
        {rowMarks.map(([l, y]) => (
          <g key={l}>
            <text x="662" y={y + 4}>{l}</text>
            <text x="1573" y={y + 4}>{l}</text>
          </g>
        ))}
      </g>
    </g>
  );
}

function Views() {
  return (
    <g fill="none" shapeRendering="crispEdges">
      <g stroke="#a5a5aa">
        <path d="M881 329.500h50M863 346.500h86M1212 329.500h50M1194 346.500h86" />
        <circle cx="905.500" cy="713.500" r="50" />
        <circle cx="905.500" cy="713.500" r="33" />
      </g>
      <g stroke={BLUE}>
        <path d="M726.500 491.500A207 207 0 0 1 854.500 394.500V353.500H957.500V394.500A207 207 0 0 1 1084.500 491.500L1055 508.500A172.600 172.600 0 0 0 756 508.500z" />
        <path d="M875.500 336.500q5-3 5-7v-10h51v10q0 4 5 7M858.500 353.500q4-2 4-6v-11h87v11q0 4 4 6" />
        <path d="M1206.500 336.500q5-3 5-7v-10h51v10q0 4 5 7M1189.500 353.500q4-2 4-6v-11h87v11q0 4 4 6" />
        <path d="M1150.500 353.500h173v155h-69v-106h-35v106h-69zM1150.500 394.500h173M1219.500 440.500h35M1150.500 491.500h69M1254.500 491.500h69" />
        <path d="M726.500 627.500h359v69h-104v35h104v69h-359v-69h104v-35h-104zM854.500 627.500v173M957.500 627.500v173" />
        <circle cx="905.500" cy="713.500" r="43.500" />
        <circle cx="905.500" cy="713.500" r="25.700" />
        <circle cx="905.500" cy="713.500" r="13.700" />
      </g>
      <g stroke="#5c4048" strokeDasharray="9 2 2 2">
        <path d="M905.500 312v116M1236.500 317v103M855 713.500h102M905.500 663v100" />
      </g>
      <g stroke={PURPLE}>
        <path d="M862.500 268v62M949.500 268v62M880.500 286v27M931.500 286v27" />
        <path d="M938 319.500h45M955 336.500h43M963 353.500h35M978.500 305v37M994.500 330v40" />
        <path d="M723.500 496l-9 16M754 513.500l-9 15M760 511l24 13.500M1051 511l-24 13.500" />
        <path d="M780.400 523A144.500 144.500 0 0 1 1030.600 523" />
        <path d="M778 380.500l-7.500 4.500L793 421.500M833.500 438l24 53.500M873 315l-6.500 7 11 12M854 332l-7 7.500 13 11" />
        <path d="M1193.500 284v46M1280.500 284v46M1211.500 304v9M1262.500 304v9M1121 319.500h84M1121 508.500h23M1269 319.500h88M1329 353.500h28M1329 394.500h43M1329 508.500h43" />
        <path d="M1150.500 497v55M1323.500 497v55M1219.500 514v18M1254.500 514v17M1236.500 427v29" />
        <path d="M726.500 599v23M854.500 598v24M957.500 600v22M1085.500 600v22M905.500 614v49M701 627.500h20M701 696.500h20M677 627.500h44M700 731.500h21M677 800.500h44" />
        <path d="M726.500 702v17M981.500 677v14M1091 696.500h24M1091 731.500h24M956 713.500h72M905.500 764v83M1085.500 806v41" />
        <path d="M836.500 669.500L917.500 721M847.500 834.500L924.500 675M894 690l68.500 138.500" />
        <path d="M924.500 675A43.500 43.500 0 0 1 949 713M879.800 713A25.700 25.700 0 0 1 894 690M917.500 721A13.700 13.700 0 0 1 906 727.500" />
        {dims.map((p, i) => <Dim key={i} p={p} />)}
        <Head x={978.5} y={319.5} a={90} />
        <Head x={978.5} y={336.5} a={-90} />
        <Head x={994.5} y={336.5} a={90} />
        <Head x={994.5} y={353.5} a={-90} />
        <Head x={793} y={421.5} a={58} />
        <Head x={833.5} y={438} a={-114} />
        <Head x={780.5} y={523} a={120} />
        <Head x={1030.5} y={523} a={60} />
        <Head x={877.5} y={334} a={47} />
        <Head x={860} y={350.5} a={42} />
        <Head x={917.5} y={721} a={33} />
        <Head x={902} y={711} a={33} />
        <Head x={924.5} y={675} a={-64} />
        <Head x={888} y={752} a={116} />
        <Head x={894} y={690} a={-116} />
        <Head x={915} y={730} a={-116} />
      </g>
      <g fill={PURPLE} textAnchor="middle" className="font-['Roboto'] text-[12px] font-light">
        {labels.map(([t, x, y, r], i) => (
          <text key={i} transform={`translate(${x} ${y}) rotate(${r})`} y="4">{t}</text>
        ))}
      </g>
    </g>
  );
}

// the shaded part, drawn at three units per pixel
function IsoPart() {
  return (
    <g transform="translate(1130 550) scale(.3333)" stroke="#000" strokeWidth="3" strokeLinejoin="round">
      <defs>
        <linearGradient id="leg" x1="0" y1="0" x2="1" y2="1">
          <stop offset="0" stopColor="#ffff80" />
          <stop offset=".7" stopColor="#ffff8c" />
          <stop offset="1" stopColor="#ece97e" />
        </linearGradient>
        <linearGradient id="back" x1="1" y1="0" x2="0" y2="1">
          <stop offset="0" stopColor="#c9c47c" />
          <stop offset="1" stopColor="#7d7a48" />
        </linearGradient>
        <linearGradient id="ring" x1="0" y1="0" x2="1" y2="0">
          <stop offset="0" stopColor="#a99a00" />
          <stop offset=".4" stopColor="#ffee10" />
          <stop offset="1" stopColor="#ffff30" />
        </linearGradient>
        <linearGradient id="wall" x1="0" y1="0" x2="1" y2="0">
          <stop offset="0" stopColor="#7a0000" />
          <stop offset="1" stopColor="#d00808" />
        </linearGradient>
      </defs>
      <path d="M527 236C495 255 465 285 432 318L450 330L536 290z" fill="url(#back)" strokeWidth="1" />
      <path d="M410 448L492 376L496 355L440 390z" fill="#6a0000" />
      <path d="M707 326L899 156C1000 205 1080 280 1137 371L941 542C885 450 800 370 707 326z" fill="url(#leg)" />
      <path d="M865 250C945 295 1010 360 1057 438L1018 456C985 405 935 350 875 313z" fill="#007d00" />
      <path d="M823 282L865 250L875 313z" fill="#00a010" />
      <path d="M875 313C935 350 985 405 1018 456L1022 470C975 405 925 350 870 313z" fill="#e8eaee" strokeWidth="1.500" />
      <path d="M1018 456L1057 438L1022 470z" fill="#e8eaee" stroke="none" />
      <path d="M1057 438L1018 456L1022 470" fill="none" />
      <path d="M527 222L695 260L707 326C805 370 890 450 941 542L900 558C850 470 745 370 610 350C560 345 520 352 496 366L410 448L358 408C385 345 435 300 490 292L536 290z" fill="#800000" />
      <path d="M695 260L886 88L899 156L707 326z" fill="#bf0505" />
      <path d="M527 222L719 50L886 88L695 260z" fill="#00e606" />
      <path d="M608 160C606 135 640 110 706 105C770 105 806 120 804 146C796 185 740 208 680 206C640 202 610 185 608 160z" fill="url(#ring)" />
      <path d="M616 128v25c10 20 40 36 80 34 50-3 85-24 92-50v-30z" fill="url(#wall)" />
      <ellipse cx="702" cy="126" rx="87" ry="41" transform="rotate(-8 702 126)" fill="#f3f3f3" />
      <path d="M636 130C640 112 670 105 710 103C750 103 768 112 767 125C757 145 725 158 690 158C660 156 638 148 636 130z" fill="url(#ring)" />
      <path d="M646 100v20c10 14 30 21 55 18 25-3 42-14 48-26v-24z" fill="url(#wall)" />
      <ellipse cx="697" cy="95" rx="53" ry="27" transform="rotate(-8 697 95)" fill="#0202e0" />
      <ellipse cx="695" cy="97" rx="27" ry="14" transform="rotate(-8 695 97)" fill="#c00808" />
    </g>
  );
}

// x, baseline, text
const tiny: [number, number, string][] = [
  [1155, 764, 'Material:'], [1155, 786, 'Finish:'],
  [1155, 805, 'Unless Otherwise Stated:'], [1155, 810, 'Linear Tol. ±0.2°, Angular Tol. 0°15\''], [1155, 816, 'Surface Finish: 0.8µm'], [1155, 822, 'All Dimensions: mm'],
  [1155, 830, 'Drawing Scale:'], [1157, 842, 'Approx Weight.'], [1155, 861, 'Projection Method.'], [1168, 867, 'FIRST ANGLE'],
  [1224, 860, 'Sheet Size:'], [1220, 844, 'Drawing Produced In'], [1213, 850, 'Accordance With:  BS8888'],
  [1294, 812, 'Document Type:'], [1294, 842, 'Legal Owner:'], [1304, 875, 'Model Decided as IS DS 002 or I am 10'],
  [1293, 765, 'This drawing and any information or'], [1293, 771, 'descriptive material set out on it'],
  [1293, 777, 'are the confidential and copyright property'], [1293, 783, 'of Emilian Popa. © and MUST NOT BE'],
  [1293, 788, 'DISCLOSED, COPIED, LOANED in whole or part'], [1293, 794, 'or used for any purpose without the'], [1293, 800, 'written permission ofEmilian Popa  .'],
  [1424, 766, 'Description:'], [1424, 802, 'Drawn by:'], [1497, 802, 'Drawn Date:'], [1425, 822, 'Checked/Approved by:'], [1496, 822, 'Checked/Approved Date.'],
  [1425, 843, 'Part Number:'], [1425, 863, 'Drawing Number.'], [1508, 863, 'Sheet:'], [1541, 863, 'Revision:'],
];

function TitleBlock() {
  return (
    <g>
      <path
        d="M1152.500 888v-130.500h414M1290.500 757v131M1421.500 757v131M1152 779.500h138M1152 798.500h138M1152 823.500h269M1152 835.500h269M1152 854.500h138M1200.500 835v19M1221.500 854v34M1290 805.500h131M1421 794.500h145M1421 815.500h145M1421 835.500h145M1421 856.500h145M1493.500 794v41M1504.500 856v33M1539.500 856v33"
        fill="none" stroke="#000" shapeRendering="crispEdges"
      />
      <g className="font-['Roboto'] text-[6px] font-bold" fill="#000">
        {tiny.map(([x, y, t], i) => <text key={i} x={x} y={y}>{t}</text>)}
      </g>
      <g className="font-['Roboto'] text-[9px]" fill="#111">
        <text x="1216" y="834">1:1</text>
        <text x="1181" y="852">Kg</text>
        <text x="1294" y="833">Emilian Popa Confidential</text>
        <text x="1512" y="880">1 of 1</text>
      </g>
      <g className="font-['Roboto'] text-[12px] font-light" fill="#111">
        <text x="1303" y="864">Emilian Popa</text>
        <text x="1246" y="880" className="text-[14px]">A3</text>
      </g>
      <g className="font-['Roboto'] text-[12px] font-light" fill={PURPLE}>
        <text x="1445" y="783">EXERCISE-192</text>
        <text x="1467" y="852">100-00-192</text>
        <text x="1435" y="881">100-00-192</text>
        <text x="1551" y="881">A</text>
        <text x="1290" y="740" className="text-[14px]">Isometric View</text>
      </g>
      <g fill="none" stroke="#000">
        <path d="M1175 876l12-4v12l-12-4zM1172 878h33M1198.500 871v15" />
        <circle cx="1198.500" cy="878" r="5" />
        <circle cx="1198.500" cy="878" r="2.500" />
      </g>
    </g>
  );
}

function Canvas() {
  return (
    <main className="flex min-w-0 flex-1 flex-col bg-[#e8eaee] pl-[3px]">
      <div className="mx-auto mt-[7px] flex h-8 items-center gap-2 border border-[#b3bdc5] bg-white px-2">
        {view.map(([label, g], i) => (
          <Tool key={label} label={label}>
            <svg viewBox="0 0 18 18" className={`size-[18px] ${i === 6 ? 'opacity-80' : ''}`}>
              {g}
              {(i === 4 || i === 5 || i === 7) && <path d="M18 15v3h-3z" fill="#444" />}
            </svg>
          </Tool>
        ))}
      </div>
      <svg viewBox="620 226 974 688" className="mx-auto mt-6 h-auto w-full max-w-[974px]" role="img" aria-label="EXERCISE-192 drawing sheet">
        <Frame />
        <Views />
        <IsoPart />
        <TitleBlock />
      </svg>
      <p className="mt-auto flex pb-[3px] pl-4 font-['Liberation_Sans'] text-[12px] leading-[14px] text-[#8d9197]">
        <span className="w-[100px]">SCALE : 3:2</span>
        <span className="w-[91px]">TYPE : PART</span>
        <span className="w-[147px]">NAME : EXERCISE-192</span>
        <span>SIZE : A3</span>
      </p>
      <div className="border-t border-[#8c8c8c] bg-[#f0f0f2] pt-[3px]">
        <div className="flex h-6 items-stretch border border-[#8c8c8c] bg-[#dedede] text-[12px]">
          <div className="flex w-[75px] items-center gap-2 pb-[2px] pl-[5px]">
            <Tool label="First sheet"><svg viewBox="0 0 10 8" className="h-2 w-[10px]"><path d="M5 0v8L0 4zM10 0v8L5 4z" fill="#555" /></svg></Tool>
            <Tool label="Previous sheet"><svg viewBox="0 0 8 8" className="size-2"><path d="M7 0v8L0 4z" fill="#a2a2a2" /></svg></Tool>
            <Tool label="Next sheet"><svg viewBox="0 0 8 8" className="size-2"><path d="M1 0v8l7-4z" fill="#a2a2a2" /></svg></Tool>
            <Tool label="Last sheet"><svg viewBox="0 0 10 8" className="h-2 w-[10px]"><path d="M0 0v8l5-4zM5 0v8l5-4z" fill="#555" /></svg></Tool>
          </div>
          <button aria-label="Add sheet" className="mb-1 flex w-[20px] items-center justify-center border border-t-0 border-r-0 border-[#8c8c8c]">
            <svg viewBox="0 0 7 7" className="size-[7px]"><path d="M3.500 0v7M0 3.500h7" stroke="#555" strokeWidth="1.300" /></svg>
          </button>
          <button className="w-[77px] border-r border-[#8c8c8c] bg-[#f2f2f2] pb-[3px] font-semibold text-[#333]">Sheet 1</button>
        </div>
      </div>
    </main>
  );
}

/* ---------- status bar ---------- */

function StatusBar() {
  return (
    <footer className="flex h-[34px] items-center border-t border-[#b4b4b4] bg-[#fefefe] pb-[2px] pl-[6px]">
      <Tool label="Model tree" className="size-[22px] border border-[#b0b0b0] bg-[#e1e1e1]">
        <svg viewBox="0 0 20 20" className="size-4">{tree.nodes}</svg>
      </Tool>
      <Tool label="Browser" className="ml-[6px]">
        <svg viewBox="0 0 18 18" className="size-[18px]">
          <ellipse cx="8.500" cy="9.500" rx="6" ry="7" fill="#3a9cc9" stroke="#1f6d95" />
          <path d="M4 6c2-2 4 1 5-1l3 2-2 3-1 4-2-3-3-1z" fill="#d3eef8" />
          <path d="M2 16C-1 12 13-2 16 2s-8 14-14 14z" fill="none" stroke="#6a98ae" />
        </svg>
      </Tool>
      <Tool label="Full screen" className="ml-[9px]">
        <svg viewBox="0 0 16 17" className="h-[17px] w-4">
          <defs>
            <linearGradient id="pane" x1="0" y1="0" x2="0" y2="1">
              <stop offset="0" stopColor="#f7fbfd" />
              <stop offset="1" stopColor="#bcd9e6" />
            </linearGradient>
          </defs>
          <path d="M.5.500h15v16H.5z" fill="url(#pane)" stroke="#2d6f8c" />
        </svg>
      </Tool>
      <span className="ml-3 h-6 w-px bg-[#d0d0d0]" />
      <div className="ml-auto flex items-center pr-[18px]">
        <span className="h-[26px] w-px bg-[#cdcdcd]" />
        <svg viewBox="0 0 34 12" className="h-3 w-[34px]" role="img" aria-label="Status">
          <circle cx="10" cy="6" r="5" fill="#46d246" />
          <circle cx="20" cy="6" r="3" fill="#cfcfcf" />
          <circle cx="27" cy="6" r="3" fill="#cfcfcf" />
        </svg>
        <span className="mr-[2px] h-[26px] w-px bg-[#cdcdcd]" />
        <Tool label="Find" className="h-6 w-7 border border-[#b9b9b9] bg-white">
          <svg viewBox="0 0 16 16" className="size-4">
            <path d="M4 1h3v3H4zM9 1h3v3H9zM3 4h4.500v5H6L5 15H0v-3zM13 4H8.500v5H10l1 6h5v-3z" fill="#4c5052" />
            <path d="M3 6l-1 6M13 6l1 6" stroke="#aeb2b4" strokeWidth="1.500" />
          </svg>
        </Tool>
        <Tool label="Find options" className="mr-[2px] h-6 w-[15px] border border-l-0 border-[#b9b9b9] bg-white"><Caret /></Tool>
        <span className="mr-[90px] h-[26px] w-px bg-[#cdcdcd]" />
        <div className="relative">
          <select aria-label="Selection filter" className="h-[23px] w-[165px] appearance-none border border-[#a9a9a9] bg-[#f6f6f6] pl-2 text-[12px] text-[#505050]">
            <option>General</option>
          </select>
          <span className="pointer-events-none absolute inset-y-0 right-0 flex w-4 items-center justify-center border-l border-[#a9a9a9]"><Caret /></span>
        </div>
      </div>
    </footer>
  );
}

export default function App() {
  return (
    <div className="flex min-h-screen flex-col bg-white font-['Open_Sans','Noto_Sans',sans-serif]">
      <TitleBar />
      <TabBar />
      <Ribbon />
      <div className="flex flex-1">
        <Sidebar />
        <Canvas />
      </div>
      <StatusBar />
    </div>
  );
}
